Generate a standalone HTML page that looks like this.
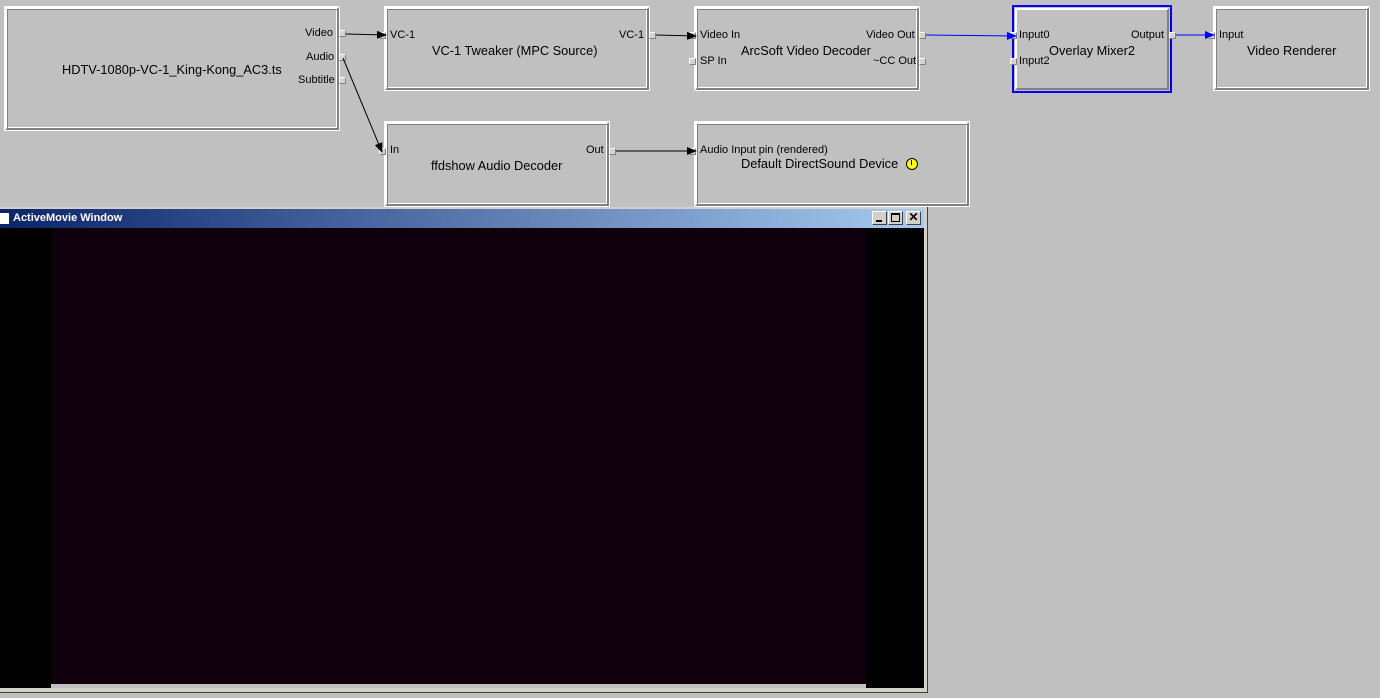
<!DOCTYPE html><html><head><style>
body{margin:0;width:1380px;height:698px;background:#c0c0c0;position:relative;overflow:hidden;font-family:"Liberation Sans",sans-serif;}
.b{position:absolute;box-sizing:border-box;border:2px solid;border-color:#fff #808080 #808080 #fff;box-shadow:inset 1px 1px 0 #808080,inset -1px -1px 0 #fff, 0 0 0 1px #fff;}
.t{position:absolute;font-size:12.8px;color:#000;white-space:nowrap;}
.p{position:absolute;font-size:11px;color:#000;white-space:nowrap;}
.pin{position:absolute;width:7px;height:7px;background:#d4d4d4;border:1px solid;border-color:#fff #808080 #808080 #fff;box-sizing:border-box;}
</style></head><body>
<div class="b" style="left:5px;top:7px;width:334px;height:123px"></div>
<div class="t" style="left:62px;top:62px">HDTV-1080p-VC-1_King-Kong_AC3.ts</div>
<div class="p" style="left:305px;top:27px">Video</div>
<div class="p" style="left:306px;top:51px">Audio</div>
<div class="p" style="left:298px;top:74px">Subtitle</div>
<div class="pin" style="left:339px;top:30px"></div><div class="pin" style="left:339px;top:54px"></div><div class="pin" style="left:339px;top:77px"></div>

<div class="b" style="left:385px;top:7px;width:264px;height:83px"></div>
<div class="t" style="left:432px;top:43px">VC-1 Tweaker (MPC Source)</div>
<div class="p" style="left:390px;top:29px">VC-1</div><div class="p" style="left:619px;top:29px">VC-1</div>
<div class="pin" style="left:379px;top:32px"></div><div class="pin" style="left:649px;top:32px"></div>

<div class="b" style="left:695px;top:7px;width:224px;height:83px"></div>
<div class="t" style="left:741px;top:43px">ArcSoft Video Decoder</div>
<div class="p" style="left:700px;top:29px">Video In</div><div class="p" style="left:700px;top:55px">SP In</div>
<div class="p" style="left:866px;top:29px">Video Out</div><div class="p" style="left:873px;top:55px">~CC Out</div>
<div class="pin" style="left:689px;top:32px"></div><div class="pin" style="left:689px;top:58px"></div><div class="pin" style="left:919px;top:32px"></div><div class="pin" style="left:919px;top:58px"></div>

<div style="position:absolute;left:1012px;top:5px;width:160px;height:88px;box-sizing:border-box;border:2px solid #0000ff"></div>
<div class="b" style="left:1015px;top:8px;width:154px;height:82px;box-shadow:none"></div>
<div class="t" style="left:1049px;top:43px">Overlay Mixer2</div>
<div class="p" style="left:1019px;top:29px">Input0</div><div class="p" style="left:1019px;top:55px">Input2</div><div class="p" style="left:1131px;top:29px">Output</div>
<div class="pin" style="left:1010px;top:32px"></div><div class="pin" style="left:1010px;top:58px"></div><div class="pin" style="left:1169px;top:32px"></div>

<div class="b" style="left:1214px;top:7px;width:155px;height:83px"></div>
<div class="t" style="left:1247px;top:43px">Video Renderer</div>
<div class="p" style="left:1219px;top:29px">Input</div>
<div class="pin" style="left:1208px;top:32px"></div>

<div class="b" style="left:385px;top:122px;width:224px;height:84px"></div>
<div class="t" style="left:431px;top:158px">ffdshow Audio Decoder</div>
<div class="p" style="left:390px;top:144px">In</div><div class="p" style="left:586px;top:144px">Out</div>
<div class="pin" style="left:379px;top:148px"></div><div class="pin" style="left:609px;top:148px"></div>

<div class="b" style="left:695px;top:122px;width:274px;height:84px"></div>
<div class="t" style="left:741px;top:156px">Default DirectSound Device</div>
<div class="p" style="left:700px;top:144px">Audio Input pin (rendered)</div>
<div class="pin" style="left:689px;top:148px"></div>
<div style="position:absolute;left:906px;top:158px;width:10px;height:10px;border-radius:50%;background:#ffff00;border:1px solid #000"></div>
<div style="position:absolute;left:911px;top:160px;width:1px;height:5px;background:#000"></div>

<svg style="position:absolute;left:0;top:0" width="1380" height="210">
<defs><marker id="a" markerWidth="10" markerHeight="8" refX="9" refY="4" orient="auto" markerUnits="userSpaceOnUse"><path d="M0,0L10,4L0,8z" fill="#000"/></marker>
<marker id="c" markerWidth="10" markerHeight="8" refX="9" refY="4" orient="auto" markerUnits="userSpaceOnUse"><path d="M0,0L10,4L0,8z" fill="#00f"/></marker></defs>
<line x1="346" y1="34" x2="386" y2="35" stroke="#000" marker-end="url(#a)"/>
<line x1="343" y1="58" x2="382" y2="152" stroke="#000" marker-end="url(#a)"/>
<line x1="656" y1="35" x2="696" y2="36" stroke="#000" marker-end="url(#a)"/>
<line x1="616" y1="151" x2="696" y2="151" stroke="#000" marker-end="url(#a)"/>
<line x1="926" y1="35" x2="1016" y2="36" stroke="#00f" marker-end="url(#c)"/>
<line x1="1176" y1="35" x2="1214" y2="35" stroke="#00f" marker-end="url(#c)"/>
</svg>

<div style="position:absolute;left:0;top:207px;width:928px;height:486px;background:#d4d0c8;border-right:1px solid #404040;border-bottom:1px solid #404040;box-sizing:border-box"></div>
<div style="position:absolute;left:0;top:209px;width:924px;height:19px;background:linear-gradient(90deg,#0a246a,#a6caf0)"></div>
<div style="position:absolute;left:0;top:213px;width:9px;height:11px;background:#fff"></div>
<div style="position:absolute;left:13px;top:212px;color:#fff;font-weight:bold;font-size:11px">ActiveMovie Window</div>
<div style="position:absolute;left:872px;top:211px;width:15px;height:14px;background:#d4d0c8;border:1px solid;border-color:#fff #404040 #404040 #fff;box-sizing:border-box"><div style="position:absolute;left:3px;top:8px;width:6px;height:2px;background:#000"></div></div>
<div style="position:absolute;left:888px;top:211px;width:15px;height:14px;background:#d4d0c8;border:1px solid;border-color:#fff #404040 #404040 #fff;box-sizing:border-box"><div style="position:absolute;left:2px;top:1px;width:9px;height:9px;border:1px solid #000;border-top-width:2px;box-sizing:border-box"></div></div>
<div style="position:absolute;left:906px;top:211px;width:15px;height:14px;background:#d4d0c8;border:1px solid;border-color:#fff #404040 #404040 #fff;box-sizing:border-box;font-size:12px;line-height:11px;text-align:center;font-weight:bold">✕</div>
<div style="position:absolute;left:0;top:228px;width:924px;height:460px;background:#000"></div>
<div style="position:absolute;left:51px;top:228px;width:815px;height:456px;background:#10000e"></div>
<div style="position:absolute;left:51px;top:684px;width:815px;height:4px;background:#c0c0c0"></div>
</body></html>
